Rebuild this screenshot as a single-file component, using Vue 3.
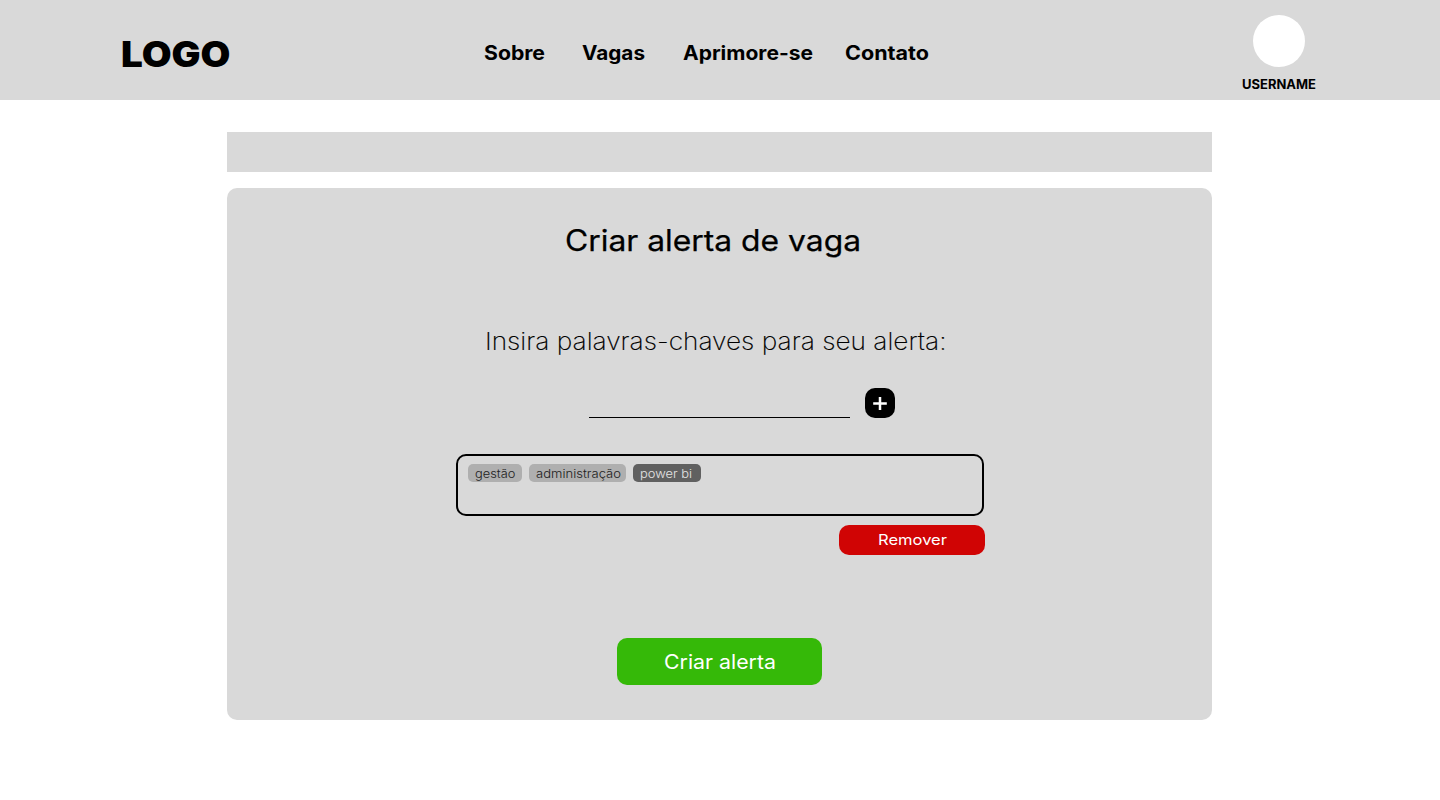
<script setup>
import { h } from 'vue'

// One line of text fitted to an exact width; `base` is the baseline inside the line box.
const Line = ({ text, w, height, size, base }) =>
  h('svg', { class: 'line', width: w, height }, [
    h('text', { x: 0, y: base, 'font-size': size, textLength: w, lengthAdjust: 'spacingAndGlyphs' }, text),
  ])
Line.props = ['text', 'w', 'height', 'size', 'base']

const links = [
  { text: 'Sobre', w: 61 },
  { text: 'Vagas', w: 63 },
  { text: 'Aprimore-se', w: 130 },
  { text: 'Contato', w: 84 },
]
const tags = [
  { text: 'gestão', w: 40.5, box: 54 },
  { text: 'administração', w: 85, box: 97 },
  { text: 'power bi', w: 52, box: 68, selected: true },
]
</script>

<template>
  <div class="page">
    <header class="header">
      <Line class="logo" text="LOGO" :w="109.5" :height="40" :size="35" :base="33.5" />
      <nav class="nav">
        <a v-for="l in links" :key="l.text" class="link">
          <Line :text="l.text" :w="l.w" :height="24" :size="19.6" :base="19" />
        </a>
      </nav>
      <div class="user">
        <div class="avatar"></div>
        <Line class="username" text="USERNAME" :w="74" :height="16" :size="13" :base="12" />
      </div>
    </header>

    <main class="main">
      <div class="strip"></div>
      <section class="card">
        <Line class="title" text="Criar alerta de vaga" :w="296" :height="40" :size="29.3" :base="31" />
        <Line class="subtitle" text="Insira palavras-chaves para seu alerta:" :w="461.5" :height="32" :size="24.2" :base="25" />
        <div class="entry">
          <input class="field" type="text" />
          <button class="add">
            <svg width="14" height="14" viewBox="0 0 14 14">
              <path d="M7 1V14M0.2 7.6H13.8" stroke="#fff" stroke-width="2.5" />
            </svg>
          </button>
        </div>
        <div class="tags">
          <span v-for="t in tags" :key="t.text" class="tag" :class="{ selected: t.selected }" :style="{ width: t.box + 'px' }">
            <Line :text="t.text" :w="t.w" :height="18" :size="11.6" :base="14" />
          </span>
        </div>
        <button class="remove">
          <Line text="Remover" :w="69" :height="30" :size="14.6" :base="20" />
        </button>
        <button class="create">
          <Line text="Criar alerta" :w="112" :height="47" :size="19.4" :base="31" />
        </button>
      </section>
    </main>
  </div>
</template>

<style>
body { background: #fff; }
</style>

<style scoped>
.page { width: 1440px; height: 800px; overflow: hidden; font-family: Inter, "Liberation Sans", sans-serif; color: #000; }
.line { display: block; flex: none; overflow: visible; fill: currentColor; }
button { border: 0; padding: 0; font: inherit; display: flex; }
.header { height: 100px; background: #d9d9d9; display: flex; align-items: flex-start; }
.logo { margin: 33px 0 0 120.5px; font-weight: 900; }
.nav { display: flex; margin: 41px 0 0 253.5px; font-weight: 700; }
.link { margin-right: 37px; }
.link:nth-child(2) { margin-right: 38px; }
.link:nth-child(3) { margin-right: 32px; }
.link:last-child { margin-right: 0; }
.user { width: 76px; margin: 15px 0 0 312.5px; display: flex; flex-direction: column; align-items: center; font-weight: 700; }
.avatar { width: 52px; height: 52px; border-radius: 50%; background: #fff; }
.username { margin-top: 10px; }
.main { width: 985px; margin: 32px 0 0 227px; }
.strip { height: 40px; background: #d9d9d9; }
.card { height: 532px; margin-top: 16px; border-radius: 10px; background: #d9d9d9; display: flex; flex-direction: column; align-items: flex-start; }
.title { margin: 32px 0 0 337.5px; font-weight: 400; stroke: currentColor; stroke-width: 0.25px; }
.subtitle { margin: 65px 0 0 257.5px; font-weight: 200; stroke: currentColor; stroke-width: 0.15px; }
.entry { display: flex; margin: 31px 0 0 362px; gap: 15px; }
.field { box-sizing: border-box; width: 261px; height: 30px; border: 0; border-bottom: 1px solid #000; background: transparent; outline: 0; padding: 0; }
.add { width: 30px; height: 30px; border-radius: 10px; background: #000; align-items: center; justify-content: center; }
.tags { box-sizing: border-box; width: 528px; height: 62px; margin: 36px 0 0 229px; padding: 8px 10px; border: 2px solid #000; border-radius: 10px; display: flex; gap: 7px; font-weight: 300; }
.tag { box-sizing: border-box; height: 18px; padding-left: 7px; border-radius: 5px; background: #afafaf; color: #222; }
.tag.selected { background: #606060; color: #e4e4e4; }
.remove { width: 146px; height: 30px; margin: 9px 0 0 612px; border-radius: 10px; background: #d00404; color: #fff; justify-content: center; font-weight: 400; }
.create { width: 205px; height: 47px; margin: 83px 0 0 390px; border-radius: 10px; background: #35b908; color: #fff; justify-content: center; font-weight: 400; }
</style>
